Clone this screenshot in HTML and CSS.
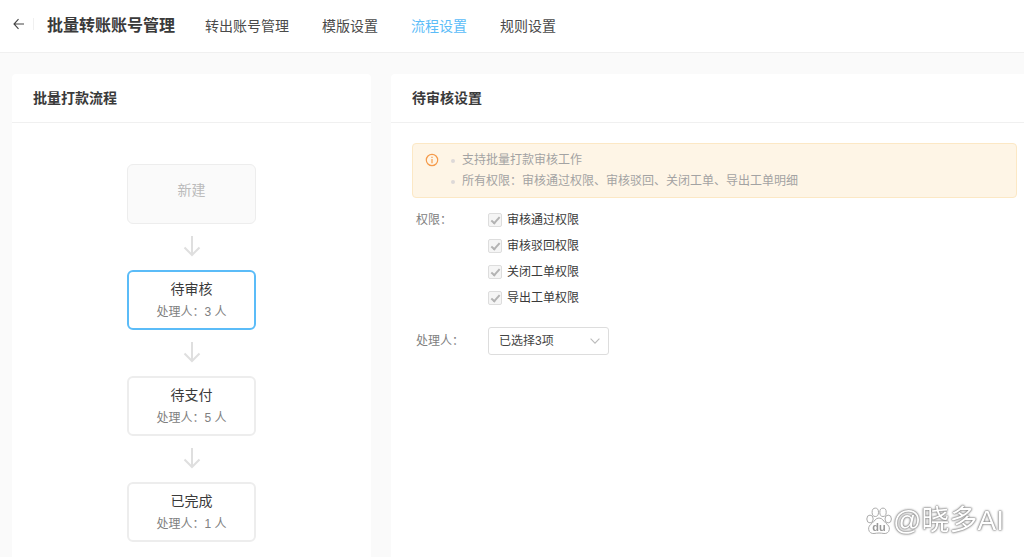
FILE: index.html
```html
<!DOCTYPE html>
<html lang="zh-CN">
<head>
<meta charset="utf-8">
<meta name="viewport" content="width=device-width, initial-scale=1">
<title>批量转账账号管理</title>
<link rel="stylesheet" href="styles.css">
</head>
<body>
<header class="topbar">
  <button class="back" type="button" aria-label="返回">
    <svg width="12" height="12" viewBox="0 0 12 12" fill="none" stroke="currentColor" stroke-width="1.1"><path d="M11 6H1M5.500 1.200L1 6l4.500 4.800"/></svg>
  </button>
  <h1 class="title">批量转账账号管理</h1>
  <nav class="tabs">
    <a class="tab" href="#">转出账号管理</a>
    <a class="tab" href="#">模版设置</a>
    <a class="tab tab-active" href="#" aria-current="page">流程设置</a>
    <a class="tab" href="#">规则设置</a>
  </nav>
</header>
<main class="content">
  <section class="card">
    <h2 class="card-title">批量打款流程</h2>
    <div class="flow">
      <button class="step" type="button" disabled><span class="step-name">新建</span></button>
      <svg class="arrow" width="18" height="22" viewBox="0 0 18 22"><path d="M9 0v19M1.500 11.500L9 19l7.500-7.500"/></svg>
      <button class="step step-active" type="button"><span class="step-name">待审核</span><span class="step-info">处理人：3 人</span></button>
      <svg class="arrow" width="18" height="22" viewBox="0 0 18 22"><path d="M9 0v19M1.500 11.500L9 19l7.500-7.500"/></svg>
      <button class="step" type="button"><span class="step-name">待支付</span><span class="step-info">处理人：5 人</span></button>
      <svg class="arrow" width="18" height="22" viewBox="0 0 18 22"><path d="M9 0v19M1.500 11.500L9 19l7.500-7.500"/></svg>
      <button class="step" type="button"><span class="step-name">已完成</span><span class="step-info">处理人：1 人</span></button>
    </div>
  </section>
  <section class="card card-settings">
    <h2 class="card-title">待审核设置</h2>
    <div class="settings">
      <div class="notice">
        <svg class="notice-icon" width="14" height="14" viewBox="0 0 14 14" fill="none" stroke="currentColor"><circle cx="7" cy="7" r="5.700" stroke-width="1.200"/><path d="M7 6v4.200M7 3.700v1.300" stroke-width="1.200"/></svg>
        <ul class="notice-list">
          <li>支持批量打款审核工作</li>
          <li>所有权限：审核通过权限、审核驳回、关闭工单、导出工单明细</li>
        </ul>
      </div>
      <div class="field" role="group" aria-labelledby="perm-label">
        <span class="field-label" id="perm-label">权限：</span>
        <div class="checks">
          <label class="check"><input type="checkbox" checked disabled>审核通过权限</label>
          <label class="check"><input type="checkbox" checked disabled>审核驳回权限</label>
          <label class="check"><input type="checkbox" checked disabled>关闭工单权限</label>
          <label class="check"><input type="checkbox" checked disabled>导出工单权限</label>
        </div>
      </div>
      <div class="field field-handler">
        <label class="field-label" for="handler">处理人：</label>
        <div class="select-wrap">
          <select class="select" id="handler"><option>已选择3项</option></select>
          <svg class="chevron" width="10" height="6" viewBox="0 0 10 6" fill="none" stroke="currentColor" stroke-width="1.100"><path d="M.6.6L5 5.200 9.400.6"/></svg>
        </div>
      </div>
    </div>
  </section>
</main>
<div class="watermark">
  <svg width="26" height="28" viewBox="0 0 26 28">
    <g class="paw">
      <ellipse cx="4" cy="12" rx="3.200" ry="3.900"/>
      <ellipse cx="9.300" cy="5.300" rx="3.200" ry="4.200"/>
      <ellipse cx="17" cy="5.300" rx="3.200" ry="4.200"/>
      <ellipse cx="22.200" cy="12" rx="3.200" ry="3.900"/>
      <path d="M13 11c-3.500 0-4.500 3.300-7 5.300-2.300 1.800-3.800 3.500-3.300 6.300.5 3 2.800 4.100 5.300 3.900 2-.2 3-.5 5-.5s3 .3 5 .5c2.500.2 4.800-.9 5.300-3.900.5-2.800-1-4.500-3.300-6.300-2.500-2-3.500-5.300-7-5.300z"/>
    </g>
    <text class="paw-text" x="13" y="24" text-anchor="middle">du</text>
  </svg>
  <span>@晓多AI</span>
</div>
</body>
</html>
```
FILE: styles.css
```css
*, *::before { box-sizing: border-box; }
body {
  margin: 0;
  min-height: 100vh;
  display: flex;
  flex-direction: column;
  background: #fafafa;
  color: #3a3a3a;
  font-family: "Liberation Sans", "Noto Sans CJK SC", sans-serif;
  font-size: 12px;
}
button { font: inherit; color: inherit; cursor: pointer; }
.topbar {
  display: flex;
  align-items: center;
  height: 53px;
  padding-left: 12px;
  background: #fff;
  border-bottom: 1px solid #f0f0f0;
}
.back {
  display: flex;
  align-items: center;
  width: 22px;
  height: 12px;
  margin-bottom: 4px;
  padding: 0 0 0 1px;
  border: 0;
  border-right: 1px solid #f0f0f0;
  background: none;
  color: #444;
}
.title {
  margin: 0 30px 0 13px;
  font-size: 16px;
  line-height: 24px;
  font-weight: 700;
  white-space: nowrap;
}
.tabs { display: flex; gap: 33px; white-space: nowrap; }
.tab {
  color: #4a4a4a;
  font-size: 14px;
  line-height: 20px;
  text-decoration: none;
}
.tab-active { color: #5bbcf8; }
.content {
  flex: 1;
  display: grid;
  grid-template-columns: 359px 1fr;
  gap: 20px;
  padding: 21px 0 0 12px;
}
.card { background: #fff; border-radius: 4px 4px 0 0; }
.card-settings { border-top-right-radius: 0; }
.card-title {
  margin: 0;
  padding: 14px 21px;
  border-bottom: 1px solid #f0f0f0;
  font-size: 14px;
  line-height: 20px;
  font-weight: 700;
}
.flow {
  display: flex;
  flex-direction: column;
  align-items: center;
  gap: 12px;
  padding: 41px 0 15px;
}
.step {
  display: flex;
  flex-direction: column;
  align-items: center;
  gap: 3px;
  width: 129px;
  height: 60px;
  padding: 7px 0;
  border: 2px solid #ededed;
  border-radius: 6px;
  background: #fff;
}
.step-active { border-color: #5bbcf8; }
.step:disabled {
  padding: 15px 0;
  border-width: 1px;
  background: #fafafa;
  color: #bbb;
}
.step-name { font-size: 14px; line-height: 20px; }
.step-info { color: #808080; line-height: 20px; }
.arrow { fill: none; stroke: #dfdfdf; stroke-width: 2; }
.settings { padding: 20px 7px 20px 21px; }
.notice {
  display: flex;
  align-items: flex-start;
  padding: 6px 12px 5px;
  border: 1px solid #fce8c5;
  border-radius: 4px;
  background: #fef5e6;
}
.notice-icon { margin-top: 3px; color: #f59a4a; }
.notice-list {
  margin: 0;
  padding: 0 0 0 12px;
  color: #a3a3a3;
  line-height: 21px;
  list-style: none;
}
.notice-list li { display: flex; align-items: center; }
.notice-list li::before {
  content: "";
  width: 4px;
  height: 4px;
  margin-right: 7px;
  border-radius: 50%;
  background: #ddd9d8;
}
.field { display: flex; margin-top: 12px; padding-left: 4px; line-height: 20px; }
.field-label { width: 72px; color: #808080; }
.field-handler { margin-top: 19px; align-items: center; }
.checks { display: flex; flex-direction: column; gap: 6px; }
.check { display: flex; align-items: center; gap: 5px; }
.check input {
  appearance: none;
  display: flex;
  justify-content: center;
  width: 14px;
  height: 14px;
  margin: 0;
  border: 1px solid #ddd;
  border-radius: 2px;
  background: #f5f5f5;
}
.check input:checked::before {
  content: "";
  width: 5px;
  height: 9px;
  margin-top: 1px;
  border: solid #b3b3b3;
  border-width: 0 2px 2px 0;
  transform: rotate(42deg);
}
.select-wrap { display: grid; align-items: center; width: 121px; }
.select {
  grid-area: 1 / 1;
  appearance: none;
  width: 100%;
  height: 28px;
  padding: 0 24px 0 10px;
  border: 1px solid #ddd;
  border-radius: 3px;
  background: #fff;
  color: #444;
  font: inherit;
}
.chevron {
  grid-area: 1 / 1;
  justify-self: end;
  margin-right: 9px;
  color: #bbb;
  pointer-events: none;
}
.watermark {
  position: fixed;
  right: 20px;
  bottom: 20px;
  display: flex;
  align-items: center;
  gap: 1px;
  color: #fff;
  font-size: 28px;
  line-height: 32px;
  text-shadow: 0 0 1px #777, 0 0 2px #888, 0 0 2px #aaa, 0 0 3px #aaa;
  pointer-events: none;
}
.paw { fill: #fff; stroke: #aaa; stroke-width: 1; }
.paw-text { fill: #999; font-size: 11px; font-weight: 700; text-shadow: none; }
```
